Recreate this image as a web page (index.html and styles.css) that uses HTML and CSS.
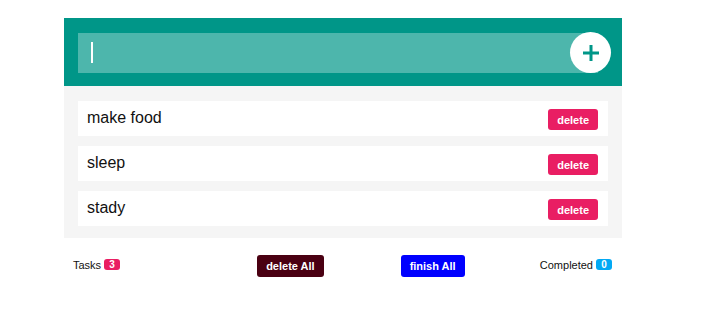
FILE: index.html
```html
<!DOCTYPE html>
<html>
<head>
<meta charset="utf-8">
<link rel="stylesheet" href="styles.css">
</head>
<body>
<div class="app">
  <div class="header">
    <div class="input"><span class="caret"></span></div>
    <button class="add" aria-label="add">
      <svg width="18" height="18" viewBox="0 0 18 18"><path d="M9 1V17M1 9H17" stroke="#009688" stroke-width="3" fill="none"/></svg>
    </button>
  </div>
  <ul class="list">
    <li class="item"><span class="name">make food</span><button class="del">delete</button></li>
    <li class="item"><span class="name">sleep</span><button class="del">delete</button></li>
    <li class="item"><span class="name">stady</span><button class="del">delete</button></li>
  </ul>
  <div class="footer">
    <div class="stat">Tasks <span class="badge pink">3</span></div>
    <button class="btn dark">delete All</button>
    <button class="btn blue">finish All</button>
    <div class="stat right">Completed <span class="badge cyan">0</span></div>
  </div>
</div>
</body>
</html>
```
FILE: styles.css
```css
* { box-sizing: border-box; }
body { margin: 0; font-family: "Liberation Sans", Arial, sans-serif; background: #fff; }
.app { margin: 18px 0 0 64px; width: 558px; }
.header { background: #009688; height: 68px; display: flex; align-items: center; padding: 1px 11px 0 14px; }
.input { flex: 1; height: 40px; background: #4db6ac; display: flex; align-items: center; padding-left: 13px; }
.caret { width: 2px; height: 21px; background: #fff; display: block; margin-top: 0; }
.add { width: 41px; height: 41px; border-radius: 50%; background: #fff; border: none; margin-left: -28px; display: flex; align-items: center; justify-content: center; padding: 0; position: relative; }
.list { list-style: none; margin: 0; padding: 15px 14px 12px; background: #f5f5f5; display: flex; flex-direction: column; gap: 10px; }
.item { background: #fff; height: 35px; display: flex; align-items: center; justify-content: space-between; padding: 0 10px 0 9px; }
.name { font-size: 16px; color: #111; margin-top: -2px; }
.del { background: #e91e63; color: #fff; border: none; border-radius: 3px; font-family: "Liberation Sans", Arial, sans-serif; font-weight: bold; font-size: 11px; height: 21px; padding: 0 9px; margin-top: 2px; }
.footer { display: flex; align-items: center; padding: 0 10px 0 9px; height: 56px; }
.stat { font-size: 11px; color: #111; display: flex; align-items: center; gap: 3px; margin-top: -3px; }
.stat.right { margin-left: auto; }
.badge { color: #fff; font-weight: bold; font-size: 10px; border-radius: 3px; padding: 0 4px; height: 11px; line-height: 11px; min-width: 16px; text-align: center; display: inline-block; }
.pink { background: #e91e63; }
.cyan { background: #03a9f4; }
.btn { color: #fff; border: none; border-radius: 3px; font-family: "Liberation Sans", Arial, sans-serif; font-weight: bold; font-size: 11px; height: 22px; padding: 0 9px; }
.dark { background: #4a0012; margin-left: 137px; }
.blue { background: #0000ff; margin-left: 77px; }
```
